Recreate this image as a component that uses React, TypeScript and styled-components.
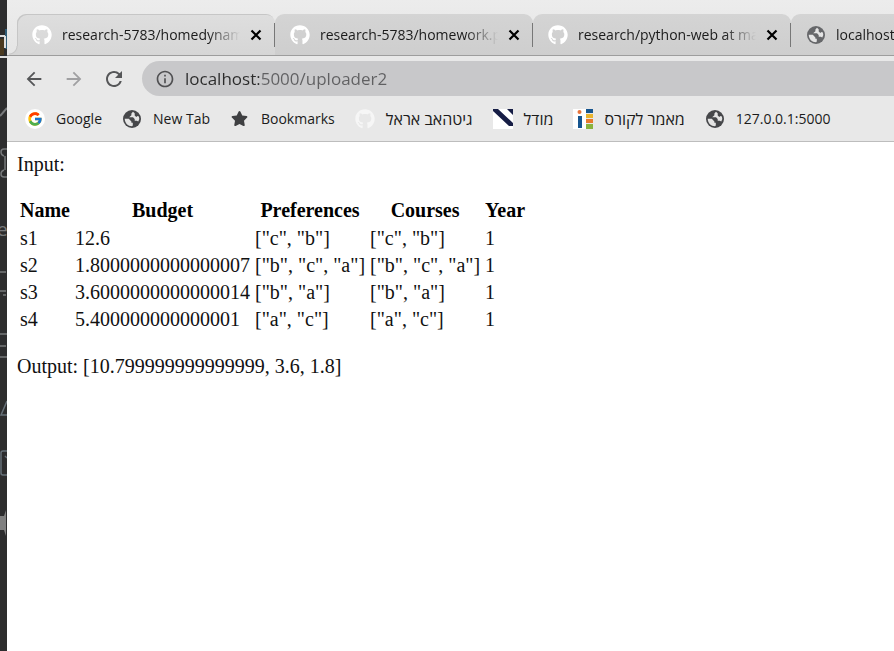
import React from "react";
import styled, { createGlobalStyle, css } from "styled-components";
import { FaGithub, FaStar } from "react-icons/fa";
import { FcGoogle } from "react-icons/fc";
import { MdArrowBack, MdArrowForward, MdRefresh, MdOutlineInfo } from "react-icons/md";

const GlobalStyle = createGlobalStyle`
  * { box-sizing: border-box; }
  body { margin: 0; background: #fff; }
  button, input { font: inherit; color: inherit; }
`;

const Screen = styled.div`
  display: flex;
  min-height: 100vh;
  overflow: hidden;
`;

const Sliver = styled.aside`
  flex: 0 0 7px;
  overflow: hidden;
  background: #2d2d2e;
  svg { display: block; }
`;

const Browser = styled.div`
  flex: 1;
  min-width: 0;
  display: flex;
  flex-direction: column;
  background: #fff;
`;

const Chrome = styled.header`
  font-family: "Open Sans", "Noto Sans", "DejaVu Sans", sans-serif;
  color: #1b1b1b;
  background: #e8e8e8;
  border-bottom: 1px solid #bdbdbd;
`;

const TabStrip = styled.nav`
  display: flex;
  height: 56px;
  padding: 14px 0 0 10px;
  overflow: hidden;
  border-bottom: 1px solid #9d9d9d;
  background: linear-gradient(#ececec, #e5e5e5);
`;

const Tab = styled.div<{ $first?: boolean }>`
  position: relative;
  flex: 0 0 258px;
  min-width: 0;
  display: flex;
  align-items: center;
  padding: 0 11px 0 15px;
  border-radius: 9px 9px 0 0;
  background: linear-gradient(#d4d4d4, #cecece);
  ${(p) =>
    p.$first &&
    css`
      background: linear-gradient(#dedede, #d6d6d6);
      box-shadow: inset 1px 1px 0 #c6c6c6;
      &::before {
        content: "";
        position: absolute;
        left: -8px;
        bottom: 0;
        width: 9px;
        height: 9px;
        background: radial-gradient(circle at 0 0, transparent 7px, #c6c6c6 8px, #d6d6d6 9px);
      }
    `}
  &::after {
    content: "";
    position: absolute;
    right: 0;
    top: 9px;
    width: 1px;
    height: 24px;
    background: #777;
  }
`;

const TabLink = styled.a`
  flex: 1;
  min-width: 0;
  display: flex;
  align-items: center;
  gap: 10px;
  color: inherit;
  text-decoration: none;
  svg { flex: none; }
`;

const TabTitle = styled.span`
  flex: 1;
  overflow: hidden;
  white-space: nowrap;
  font-size: 14px;
  line-height: 20px;
  mask-image: linear-gradient(to right, #000 82%, transparent);
`;

const IconButton = styled.button<{ $size: number; $tone: string }>`
  display: grid;
  place-items: center;
  width: ${(p) => p.$size}px;
  height: ${(p) => p.$size}px;
  padding: 0;
  border: 0;
  background: none;
  && { color: ${(p) => p.$tone}; }
  svg { flex: none; }
`;

const CloseButton = styled(IconButton)`
  margin-left: 8px;
`;

const Toolbar = styled.div`
  display: flex;
  align-items: center;
  gap: 16px;
  padding: 5px 0 0 15px;
`;

const AddressBar = styled.label`
  flex: 1;
  display: flex;
  align-items: center;
  gap: 10px;
  height: 35px;
  padding-left: 13px;
  border-radius: 18px 0 0 18px;
  background: #c8c8ca;
  color: #505052;
`;

const AddressInput = styled.input`
  flex: 1;
  min-width: 0;
  padding: 0;
  border: 0;
  outline: 0;
  font-size: 17px;
  line-height: 24px;
  background: linear-gradient(to right, #2b2b2b 74px, #606062 74px);
  background-clip: text;
  && { color: transparent; caret-color: #222; }
`;

const Bookmarks = styled.nav`
  display: flex;
  align-items: center;
  gap: 20px;
  height: 45px;
  padding-left: 18px;
`;

const Bookmark = styled.a<{ $hebrew?: boolean }>`
  display: flex;
  align-items: center;
  gap: 11px;
  color: inherit;
  font-size: ${(p) => (p.$hebrew ? 16 : 14)}px;
  line-height: 20px;
  white-space: nowrap;
  text-decoration: none;
`;

const Favicon = styled.span<{ $disc?: boolean }>`
  display: grid;
  place-items: center;
  width: 20px;
  height: 20px;
  border-radius: ${(p) => (p.$disc ? "50%" : "0")};
  background: ${(p) => (p.$disc ? "#fff" : "none")};
`;

const Page = styled.main`
  padding: 11px 10px;
  font-family: "Liberation Serif", "Times New Roman", serif;
  font-size: 20px;
  line-height: 23px;
  color: #111;
`;

const Line = styled.p`
  margin: 0;
`;

const Table = styled.table`
  margin: 19px 0 21px;
  border-spacing: 2px;
  th, td { padding: 1px 2px 1px 1px; text-align: left; white-space: nowrap; }
  th { text-align: center; color: #000; line-height: 25px; }
`;

const Globe = ({ color = "#46474a" }: { color?: string }) => (
  <svg width="20" height="20" viewBox="0 0 20 20" aria-hidden="true">
    <circle cx="10" cy="10" r="9" fill={color} />
    <path d="M11 2.8 9.4 4.4v1.8L7.2 8.3H11l1.7 1.8v1.7h2l1.6.8 1-2.6-.4-2.6-1.4-.3-1.2 1-1.6-1.5V4.2L11 2.8Z" fill="#e4e4e4" />
    <path d="M2.7 9.8h4.1l2.6 2.6v1.4h1.4v2.6l-.8.9c-4.1 0-7.1-3-7.3-7.5Z" fill="#e4e4e4" />
  </svg>
);

const Cross = () => (
  <svg width="16" height="16" viewBox="0 0 16 16" aria-hidden="true">
    <path d="m3.5 3.5 9 9M12.5 3.5l-9 9" stroke="currentColor" strokeWidth="2.2" />
  </svg>
);

const Moodle = () => (
  <svg width="20" height="20" viewBox="0 0 20 20" aria-hidden="true">
    <path fill="#fff" d="M0 0h20v20H0z" />
    <path fill="#161d45" d="M0 0h5l15 14v3h-4L0 2zM14 0h6v6z" />
  </svg>
);

const Ie = () => (
  <svg width="20" height="20" viewBox="0 0 20 20" aria-hidden="true">
    <path fill="#fff" d="M0 0h13v20H0z" />
    <circle cx="6.5" cy="3" r="2" fill="#e8743b" />
    <path fill="#16558f" d="M5 7h4v12H5zM13 0h7v4h-7z" />
    <path fill="#e9b52f" d="M13 5h7v4h-7z" />
    <path fill="#e97a2e" d="M13 10h7v4h-7z" />
    <path fill="#8ab33d" d="M13 15h7v5h-7z" />
  </svg>
);

const tabs = [
  { title: "research-5783/homedynamic", icon: "github" },
  { title: "research-5783/homework.pdf", icon: "github" },
  { title: "research/python-web at main", icon: "github" },
  { title: "localhost:5000", icon: "globe" },
];

const bookmarks = [
  { label: "Google", icon: <FcGoogle size={16} />, disc: true },
  { label: "New Tab", icon: <Globe /> },
  { label: "Bookmarks", icon: <FaStar size={17} color="#3f4042" /> },
  { label: "גיטהאב אראל", icon: <FaGithub size={20} color="#f6f6f6" />, hebrew: true },
  { label: "מודל", icon: <Moodle />, hebrew: true },
  { label: "מאמר לקורס", icon: <Ie />, hebrew: true },
  { label: "127.0.0.1:5000", icon: <Globe /> },
];

const columns = ["Name", "Budget", "Preferences", "Courses", "Year"];
const rows = [
  ["s1", "12.6", '["c", "b"]', '["c", "b"]', "1"],
  ["s2", "1.8000000000000007", '["b", "c", "a"]', '["b", "c", "a"]', "1"],
  ["s3", "3.6000000000000014", '["b", "a"]', '["b", "a"]', "1"],
  ["s4", "5.400000000000001", '["a", "c"]', '["a", "c"]', "1"],
];

export default function App() {
  return (
    <Screen>
      <GlobalStyle />
      <Sliver aria-hidden="true">
        <svg width="7" height="651" viewBox="0 0 7 651" fill="none" stroke="#77797b">
          <path d="M5 29h2v20H5z" fill="#315d77" stroke="none" />
          <path d="M0 39h4v16H0z" fill="#4a3a20" stroke="none" />
          <path d="M0 36h5M0 57h7M5 36v12" stroke="#dedede" strokeWidth="2" />
          <path d="M0 116 7 108" strokeWidth="2" />
          <path d="M7 149H4q-3 0-3 3t3 4M7 177H4q-3 0-3-3t3-4M5 156v14" strokeWidth="1.5" />
          <text x="-3" y="236" fontFamily="Open Sans" fontSize="19" fill="#77797b" stroke="none">e</text>
          <path d="M0 272h6M0 291h6M3 295h3M0 334h7M0 346h6M0 357h7" strokeWidth="1.5" />
          <path d="M7 401 1 415h6" stroke="#667078" strokeWidth="1.5" />
          <path d="M7 451H3q-2 0-2 2v20q0 2 2 2h4M5 456l2 2" stroke="#667078" strokeWidth="1.5" />
          <path d="M0 516h4l2-6v26l-2-6H0z" fill="#808080" stroke="none" />
        </svg>
      </Sliver>
      <Browser>
        <Chrome>
          <TabStrip aria-label="Tabs">
            {tabs.map((t, i) => (
              <Tab key={t.title} $first={i === 0}>
                <TabLink href="#">
                  {t.icon === "github" ? <FaGithub size={20} color="#fff" /> : <Globe color="#66676a" />}
                  <TabTitle>{t.title}</TabTitle>
                </TabLink>
                <CloseButton $size={16} $tone="#000" aria-label="Close tab">
                  <Cross />
                </CloseButton>
              </Tab>
            ))}
          </TabStrip>
          <Toolbar>
            <IconButton $size={24} $tone="#555658" aria-label="Back"><MdArrowBack size={22} /></IconButton>
            <IconButton $size={24} $tone="#a0a0a2" aria-label="Forward"><MdArrowForward size={22} /></IconButton>
            <IconButton $size={24} $tone="#555658" aria-label="Reload"><MdRefresh size={24} /></IconButton>
            <AddressBar>
              <MdOutlineInfo size={20} />
              <AddressInput aria-label="Address" defaultValue="localhost:5000/uploader2" />
            </AddressBar>
          </Toolbar>
          <Bookmarks aria-label="Bookmarks">
            {bookmarks.map((b) => (
              <Bookmark key={b.label} href="#" $hebrew={b.hebrew}>
                <Favicon $disc={b.disc}>{b.icon}</Favicon>
                <bdi>{b.label}</bdi>
              </Bookmark>
            ))}
          </Bookmarks>
        </Chrome>
        <Page>
          <Line>Input:</Line>
          <Table>
            <thead>
              <tr>{columns.map((c) => <th key={c} scope="col">{c}</th>)}</tr>
            </thead>
            <tbody>
              {rows.map((r) => (
                <tr key={r[0]}>{r.map((v, i) => <td key={i}>{v}</td>)}</tr>
              ))}
            </tbody>
          </Table>
          <Line>Output: [10.799999999999999, 3.6, 1.8]</Line>
        </Page>
      </Browser>
    </Screen>
  );
}
